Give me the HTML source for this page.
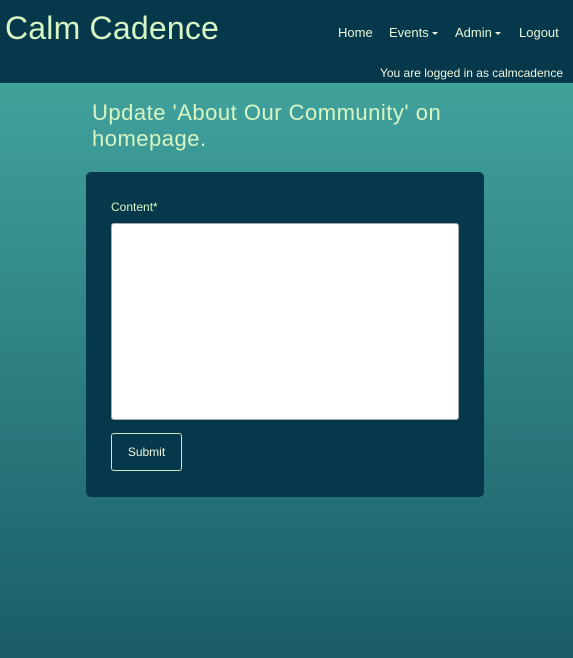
<!DOCTYPE html>
<html><head><style>
*{margin:0;padding:0;box-sizing:border-box}
body{width:573px;height:658px;overflow:hidden;font-family:"Liberation Sans",sans-serif;background:linear-gradient(#41a29c 83px,#1a5c67 658px);position:relative;color:#d8f5c4}
.nav{position:absolute;left:0;top:0;width:573px;height:83px;background:#06384b}
.brand{position:absolute;left:5px;top:10px;font-size:32px;letter-spacing:0.2px;color:#d8f5c4}
.links{position:absolute;top:25px;font-size:13px;color:#e8f5d8}
.car{display:inline-block;border-left:3px solid transparent;border-right:3px solid transparent;border-top:3px solid #e8f5d8;vertical-align:middle;margin-left:3px}
.logged{position:absolute;right:10px;top:66px;font-size:12px;color:#f0f5e0}
h1{position:absolute;left:92px;top:100px;font-size:22px;letter-spacing:0.5px;font-weight:normal;line-height:26px;color:#d8f5c4}
.card{position:absolute;left:86px;top:172px;width:398px;height:325px;background:#06384b;border-radius:5px}
.lbl{position:absolute;left:25px;top:28px;font-size:12px}
.ta{position:absolute;left:25px;top:51px;width:348px;height:197px;background:#fff;border:1px solid #aaa;border-radius:3px}
.btn{position:absolute;left:25px;top:261px;width:71px;height:38px;border:1px solid #c8e8c0;border-radius:3px;font-size:12px;text-align:center;line-height:36px;color:#f0f5e0}
</style></head><body>
<div class="nav">
<div class="brand">Calm Cadence</div>
<div class="links" style="left:338px">Home</div>
<div class="links" style="left:389px">Events<span class="car"></span></div>
<div class="links" style="left:455px">Admin<span class="car"></span></div>
<div class="links" style="left:519px">Logout</div>
<div class="logged">You are logged in as calmcadence</div>
</div>
<h1>Update 'About Our Community' on<br>homepage.</h1>
<div class="card">
<div class="lbl">Content*</div>
<div class="ta"></div>
<div class="btn">Submit</div>
</div>
</body></html>
